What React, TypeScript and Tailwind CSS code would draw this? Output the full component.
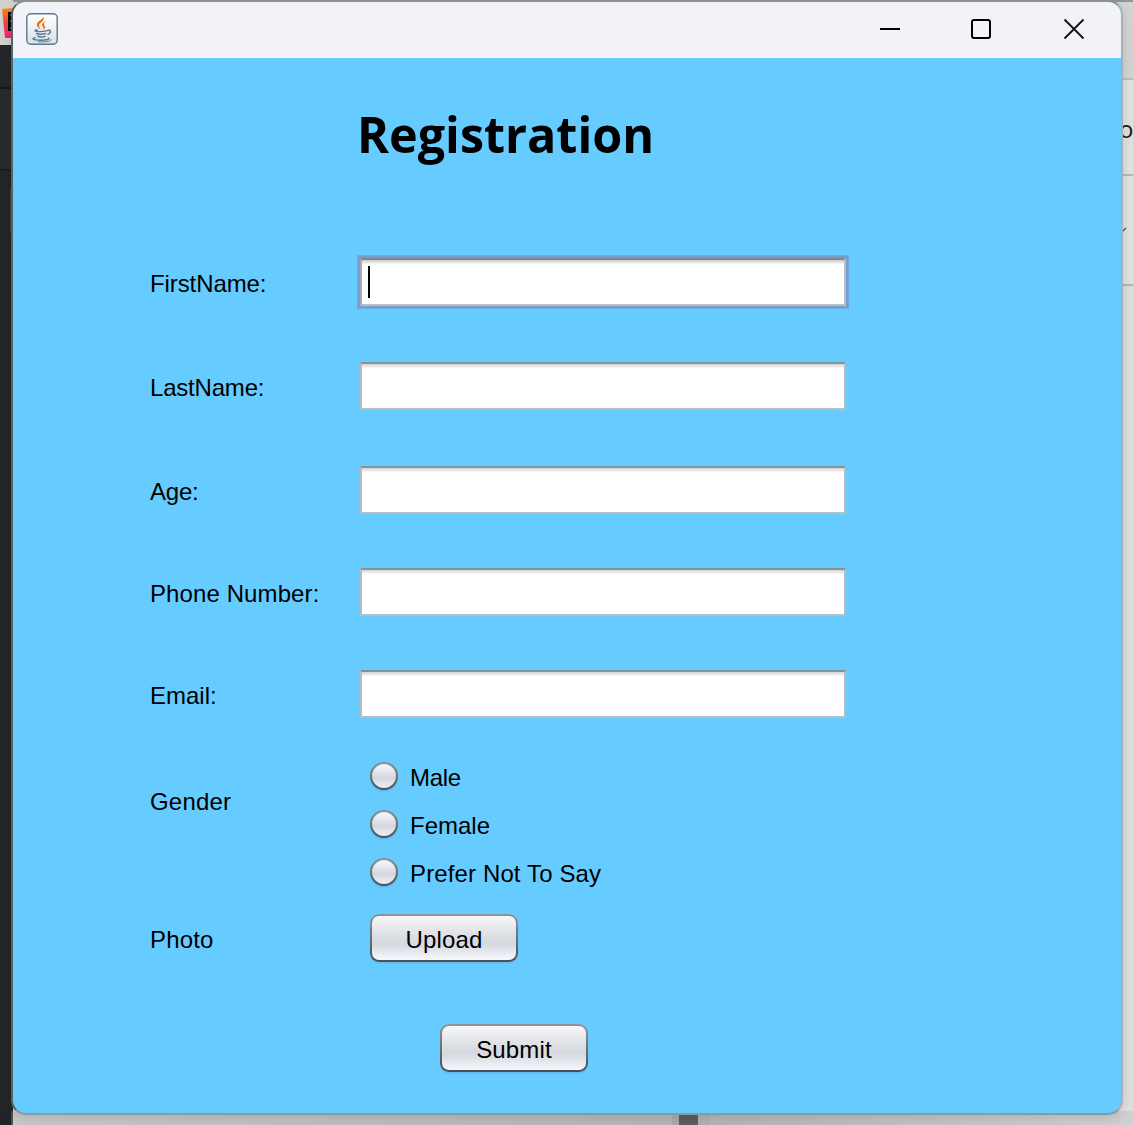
import React from "react";

function JavaIcon() {
  return (
    <svg width="32" height="32" viewBox="0 0 32 32" fill="none">
      <defs>
        <linearGradient id="tile" x1="0" y1="0" x2="0" y2="1">
          <stop offset="0" stopColor="#ffffff" />
          <stop offset="1" stopColor="#dcdfe2" />
        </linearGradient>
      </defs>
      <rect x="0.8" y="0.8" width="30.4" height="30.4" rx="4" fill="url(#tile)" stroke="#5a7890" strokeWidth="1.4" />
      <path d="M17 3.800c1.800 3-.6 4.600-2.500 6.200-2.200 2-1.700 3.600.700 6.800-4.600-2.800-5.300-5.400-3.200-7.700 1.800-1.900 5-2.800 5-5.300Z" fill="#e8721c" />
      <path d="M20.300 7.800c-4.200 2-5.300 3.800-3.300 6 .9 1 .8 1.900-.3 3.200 2.700-1.400 3.100-2.900 1.700-4.600-1.100-1.400-.6-2.700 1.900-4.600Z" fill="#e8721c" />
      <path d="M11.500 16.800c-4 .8-3.200 1.800 2 1.800 3 0 5.500-.3 7.500-.9" stroke="#547b96" strokeWidth="1.400" />
      <path d="M21 17.600c3.700-1.500 5.200 1.900.400 4" stroke="#547b96" strokeWidth="1.500" />
      <path d="M10.300 19.800c.5 1.800 6 1.800 9.900.6M11.300 22.700c1.600 1.500 5.500 1.400 8.300.4" stroke="#547b96" strokeWidth="1.500" />
      <path d="M9.800 24.600c-5 1-3.300 2.600 5 2.600 6 0 9.600-1 7.700-2.500" stroke="#547b96" strokeWidth="1.400" />
      <path d="M12 28.700c6 .5 12.400-.1 13.300-2.200" stroke="#547b96" strokeWidth="0.900" />
    </svg>
  );
}

function Desktop() {
  return (
    <div className="absolute inset-0 flex flex-col bg-[#d0d0d0]">
      <div className="flex h-[1111px] justify-between">
        <div className="flex w-[13px] flex-col bg-[#242527]">
          <div className="relative h-[45px] overflow-hidden bg-[#d2d2d2]">
            <svg className="absolute left-0 top-0" width="13" height="45">
              <defs>
                <linearGradient id="logo" x1="0" y1="0" x2="0" y2="1">
                  <stop offset="0" stopColor="#ff8a16" />
                  <stop offset="0.45" stopColor="#f54a38" />
                  <stop offset="1" stopColor="#ef247d" />
                </linearGradient>
              </defs>
              <path d="M2 9 13 8V38H5Z" fill="url(#logo)" />
              <path d="M8 12h5v19H8Z" fill="#050505" />
              <path d="M10 15h3M12 15v6M10 21h3M10 28h3" stroke="#c3b5b5" strokeWidth="1" />
            </svg>
          </div>
          <div className="h-[44px] border-b-2 border-[#171819] bg-[#252628]" />
          <div className="h-[82px] border-b-2 border-[#1a1b1c] bg-[#292a2a]" />
          <div className="ml-[10px] mt-4 h-[48px] rounded-l bg-[#3b3b3c]" />
        </div>
        <div className="flex w-[13px] flex-col bg-[#dedede]">
          <div className="h-[80px] border-b-2 border-[#bcbcbc] bg-[#d3d3d3]" />
          <div className="h-[96px] border-b-2 border-[#b7b7b7] bg-[#e1e1e1] pt-[37px] font-['Open_Sans',sans-serif] text-[24px] leading-[24px] text-[#191919]">
            <span className="-ml-[1px] block w-[14px]">o</span>
          </div>
          <div className="h-[110px] border-b-2 border-[#b7b7b7] bg-[#e1e1e1] pt-[50px]">
            <svg width="7" height="10" fill="none" stroke="#555555" strokeWidth="1.300">
              <path d="m0 8 6-6" />
            </svg>
          </div>
        </div>
      </div>
      <div className="flex h-[14px] bg-[#b5b5b5]">
        <div className="w-[11px] bg-[#222326]" />
        <div className="w-[2px] bg-[#505050]" />
        <div className="w-[659px] bg-gradient-to-r from-[#c8c8c8] to-[#b6b6b6]" />
        <div className="w-[7px] bg-[#aaaaaa]" />
        <div className="w-[19px] bg-[#5d5d5d]" />
        <div className="w-[12px] bg-[#b0b0b0]" />
        <div className="flex-1 bg-gradient-to-r from-[#b5b5b5] to-[#d0d0d0]" />
      </div>
    </div>
  );
}

function TitleBar() {
  return (
    <div className="flex h-[56px] shrink-0 items-start justify-between bg-[#f2f3f9] pl-[13px] pr-[36px] pt-[11px]">
      <JavaIcon />
      <div className="flex pt-[5px]">
        <svg className="mr-[69px]" width="22" height="22" fill="none" stroke="#000">
          <path d="M1 11h20" strokeWidth="2" />
        </svg>
        <svg className="mr-[71px]" width="22" height="22" fill="none" stroke="#000">
          <rect x="2" y="2" width="18" height="18" rx="2" strokeWidth="2" />
        </svg>
        <svg width="22" height="22" fill="none" stroke="#111">
          <path d="m1.500 1.500 19 19m0-19-19 19" strokeWidth="1.800" />
        </svg>
      </div>
    </div>
  );
}

function Field({ label, labelClass = "", focused = false }: { label: string; labelClass?: string; focused?: boolean }) {
  return (
    <div className="flex h-[48px] items-center">
      <label className={"w-[210px] shrink-0 whitespace-nowrap pt-[4px] " + labelClass}>{label}</label>
      <div
        className={
          focused
            ? "flex h-[48px] w-[486px] items-center border-2 border-b-[#bbbec2] border-l-[#aaa9af] border-r-[#bbbec2] border-t-[#85868d] bg-[linear-gradient(#c6c6c9_0px,#eeeeee_3px,#ffffff_5px)] bg-no-repeat pl-[6px] shadow-[0_0_0_2px_#729fd0,0_0_0_3px_#70abe0]"
            : "h-[48px] w-[486px] border-2 border-b-[#b9bec2] border-l-[#b6bbbf] border-r-[#b6bbbf] border-t-[#80939f] bg-[linear-gradient(#d2d2d2_0px,#f1f1f1_3px,#ffffff_5px)]"
        }
      >
        {focused && <div className="h-[32px] w-[2px] bg-black" />}
      </div>
    </div>
  );
}

function Radio({ label, labelClass = "" }: { label: string; labelClass?: string }) {
  return (
    <div className="flex h-[48px] items-center">
      <div className="h-[28px] w-[28px] rounded-full bg-gradient-to-b from-[#8b9298] to-[#484e57] p-[2px] shadow-[0_2px_1px_#66bbea]">
        <div className="h-full w-full rounded-full bg-[linear-gradient(#fafafc,#d5d8e0_55%,#d8dbe3_65%,#eceef5)]" />
      </div>
      <span className={"ml-[12px] pt-[4px] " + labelClass}>{label}</span>
    </div>
  );
}

function PushButton({ label }: { label: string }) {
  return (
    <button className="block h-[48px] w-[148px] rounded-[9px] bg-gradient-to-b from-[#8e959d] to-[#484e57] p-[2px] shadow-[0_2px_1px_#66bbea]">
      <span className="flex h-full w-full items-center justify-center rounded-[7px] bg-[linear-gradient(#f7f7f9,#dddfe4_45%,#d6d9e0_60%,#d9dce3_68%,#f7f8fd)] pt-[4px] tracking-[0.15px]">
        {label}
      </span>
    </button>
  );
}

export default function App() {
  return (
    <div className="relative h-[1125px] w-[1133px] overflow-hidden">
      <Desktop />
      <div className="absolute left-[13px] right-0 top-0 h-[2px] bg-[#949494]" />
      <div className="absolute left-[11px] top-0 flex h-[1115px] w-[1112px] flex-col overflow-hidden rounded-[15px] border-2 border-b-[#8799a2] border-l-[#566368] border-r-[#a9afb3] border-t-[#909090] bg-[#66ccff] shadow-[0_3px_12px_rgba(0,0,0,0.12)]">
        <TitleBar />
        <main className="pl-[137px] font-['Liberation_Sans',Arial,sans-serif] text-[24px] leading-[28px] text-black">
          <h1 className="ml-[207px] h-[200px] w-[400px] origin-left scale-x-[0.951] pt-[40px] font-['Open_Sans',sans-serif] text-[51px] font-bold leading-[70px]">
            Registration
          </h1>
          <div className="flex flex-col gap-[56px]">
            <Field label="FirstName:" labelClass="tracking-[-0.1px]" focused />
            <Field label="LastName:" labelClass="tracking-[-0.2px]" />
            <div className="flex flex-col gap-[54px]">
              <Field label="Age:" labelClass="tracking-[-0.2px]" />
              <Field label="Phone Number:" labelClass="tracking-[0.1px]" />
              <Field label="Email:" />
            </div>
          </div>
          <div className="mt-[34px] flex">
            <div className="w-[220px] pt-[36px] tracking-[0.2px]">Gender</div>
            <div>
              <Radio label="Male" labelClass="tracking-[-0.3px]" />
              <Radio label="Female" />
              <Radio label="Prefer Not To Say" labelClass="tracking-[0.13px]" />
            </div>
          </div>
          <div className="mt-[18px] flex h-[48px] items-center">
            <div className="w-[220px] pt-[4px] tracking-[0.15px]">Photo</div>
            <PushButton label="Upload" />
          </div>
          <div className="ml-[290px] mt-[62px]">
            <PushButton label="Submit" />
          </div>
        </main>
      </div>
    </div>
  );
}
